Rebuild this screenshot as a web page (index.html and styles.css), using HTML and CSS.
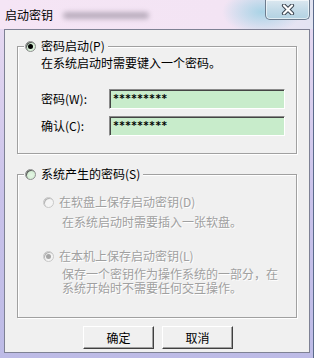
FILE: index.html
```html
<!DOCTYPE html>
<html lang="zh-CN">
<head>
    <meta charset="UTF-8">
    <meta name="viewport" content="width=device-width, initial-scale=1.0">
    <title>启动密钥</title>
    <link rel="stylesheet" href="styles.css">
</head>
<body>
    <div class="window">
        <div class="titlebar">
            <span class="title">启动密钥</span>
            <span class="smudge"></span>
            <div class="close">
                <svg width="16" height="11" viewBox="0 0 16 11">
                    <path d="M4 1.5 L12 9.5 M12 1.5 L4 9.5" fill="none" stroke="#3a4450" stroke-width="4.2" stroke-linecap="round"/>
                    <path d="M4 1.5 L12 9.5 M12 1.5 L4 9.5" fill="none" stroke="#fff" stroke-width="2.2" stroke-linecap="round"/>
                </svg>
            </div>
        </div>

        <div class="client">
            <div class="group group-pass">
                <div class="legend"><span class="radio checked"></span>密码启动(P)</div>
                <p class="note">在系统启动时需要键入一个密码。</p>
                <div class="field">
                    <span class="field-label">密码(W):</span>
                    <span class="input">*********</span>
                </div>
                <div class="field">
                    <span class="field-label">确认(C):</span>
                    <span class="input">*********</span>
                </div>
            </div>

            <div class="group group-sys">
                <div class="legend"><span class="radio"></span>系统产生的密码(S)</div>
                <div class="option">
                    <div class="option-head"><span class="radio off"></span>在软盘上保存启动密钥(D)</div>
                    <p class="option-note">在系统启动时需要插入一张软盘。</p>
                </div>
                <div class="option second">
                    <div class="option-head"><span class="radio off checked"></span>在本机上保存启动密钥(L)</div>
                    <p class="option-note tight">保存一个密钥作为操作系统的一部分，在<br>系统开始时不需要任何交互操作。</p>
                </div>
            </div>

            <div class="buttons">
                <button>确定</button>
                <button>取消</button>
            </div>
        </div>
    </div>
</body>
</html>
```

FILE: styles.css
```css
body {
    margin: 0;
    font-family: "Noto Sans CJK SC", "DejaVu Sans", sans-serif;
    font-size: 12px;
    color: #000;
}
.window {
    width: 314px;
    height: 358px;
    box-sizing: border-box;
    display: flex;
    flex-direction: column;
    background: linear-gradient(to bottom, #eadcf2 0%, #c9c2ea 55%, #bdbbe6 100%);
    border-right: 1px solid #5a6a8a;
}
.titlebar {
    height: 29px;
    display: flex;
    align-items: flex-start;
    background:
        radial-gradient(ellipse 40px 22px at 262px 12px, #a9d3e6 0%, rgba(169, 211, 230, 0) 100%),
        linear-gradient(to right, #f5e5f5 0%, #f3e4f4 70%, #e2e4f2 100%);
}
.title {
    margin: 7px 0 0 5px;
    line-height: 16px;
    font-size: 12px;
}
.smudge {
    width: 86px;
    height: 7px;
    margin: 12px 0 0 10px;
    background: #8a8090;
    border-radius: 4px;
    filter: blur(2.5px);
    opacity: 0.55;
}
.close {
    margin-left: auto;
    margin-right: 3px;
    width: 45px;
    height: 20px;
    box-sizing: border-box;
    border: 1px solid #6d7c8e;
    border-top: none;
    border-radius: 0 0 5px 5px;
    background: linear-gradient(to bottom, #dce8f0 0%, #c4dbe8 50%, #b2d2e2 100%);
    box-shadow: inset 0 0 0 1px rgba(255, 255, 255, 0.6);
    display: flex;
    align-items: center;
    justify-content: center;
}
.client {
    flex: 1;
    margin: 0 3px 5px 4px;
    border: 1px solid #7e8194;
    background: #f0f0f0;
}
.group {
    position: relative;
    width: 280px;
    box-sizing: border-box;
    margin-left: 12px;
    border: 1px solid #a0a0a0;
    box-shadow: inset 1px 1px #fff, 1px 1px #fff;
}
.group-pass {
    margin-top: 16px;
    padding: 9px 0 17px 23px;
}
.group-sys {
    margin-top: 20px;
    padding: 20px 0 22px 0;
}
.legend {
    position: absolute;
    top: -8px;
    left: 6px;
    height: 14px;
    line-height: 14px;
    padding: 0 3px 0 1px;
    background: #f0f0f0;
    display: flex;
    align-items: center;
}
.radio {
    position: relative;
    width: 11px;
    height: 11px;
    box-sizing: border-box;
    margin-right: 5px;
    border-radius: 50%;
    border: 1px solid #8e8f8f;
    background: radial-gradient(circle at 60% 60%, #e6f6e6 0%, #c3e6c3 100%);
    box-shadow: inset 1px 1px 0 #5f6060;
}
.radio.checked::after {
    content: "";
    position: absolute;
    left: 2px;
    top: 2px;
    width: 5px;
    height: 5px;
    border-radius: 50%;
    background: #000;
}
.radio.off {
    border-color: #c8c8c8;
    background: #f4f4f4;
    box-shadow: inset 1px 1px 0 #b4b4b4;
}
.radio.off.checked::after {
    background: #a6a6a6;
}
.note, .option-note {
    margin: 0;
    line-height: 14px;
}
.field {
    display: flex;
    align-items: center;
    margin-top: 7px;
}
.note + .field {
    margin-top: 19px;
}
.field-label {
    width: 68px;
    line-height: 14px;
}
.input {
    width: 176px;
    height: 20px;
    box-sizing: border-box;
    padding-left: 3px;
    border: 1px solid;
    border-color: #8a8a8a #fff #fff #8a8a8a;
    box-shadow: inset 1px 1px #444;
    background: #c8eccb;
    font-family: "DejaVu Sans Mono", monospace;
    font-size: 10px;
    font-weight: bold;
    line-height: 18px;
}
.option {
    color: #a0a0a0;
    text-shadow: 1px 1px 0 #fff;
}
.option.second {
    margin-top: 20px;
}
.option-head {
    display: flex;
    align-items: center;
    line-height: 14px;
    padding-left: 25px;
}
.option-note {
    margin-top: 6px;
    padding-left: 44px;
}
.option-note.tight {
    margin-top: 4px;
}
.buttons {
    display: flex;
    gap: 8px;
    margin: 8px 0 0 78px;
}
button {
    width: 71px;
    height: 23px;
    padding: 0;
    font-family: inherit;
    font-size: 12px;
    color: #000;
    background: #f0f0f0;
    border: 1px solid;
    border-color: #fff #404040 #404040 #fff;
    box-shadow: inset -1px -1px #a0a0a0;
}
```
